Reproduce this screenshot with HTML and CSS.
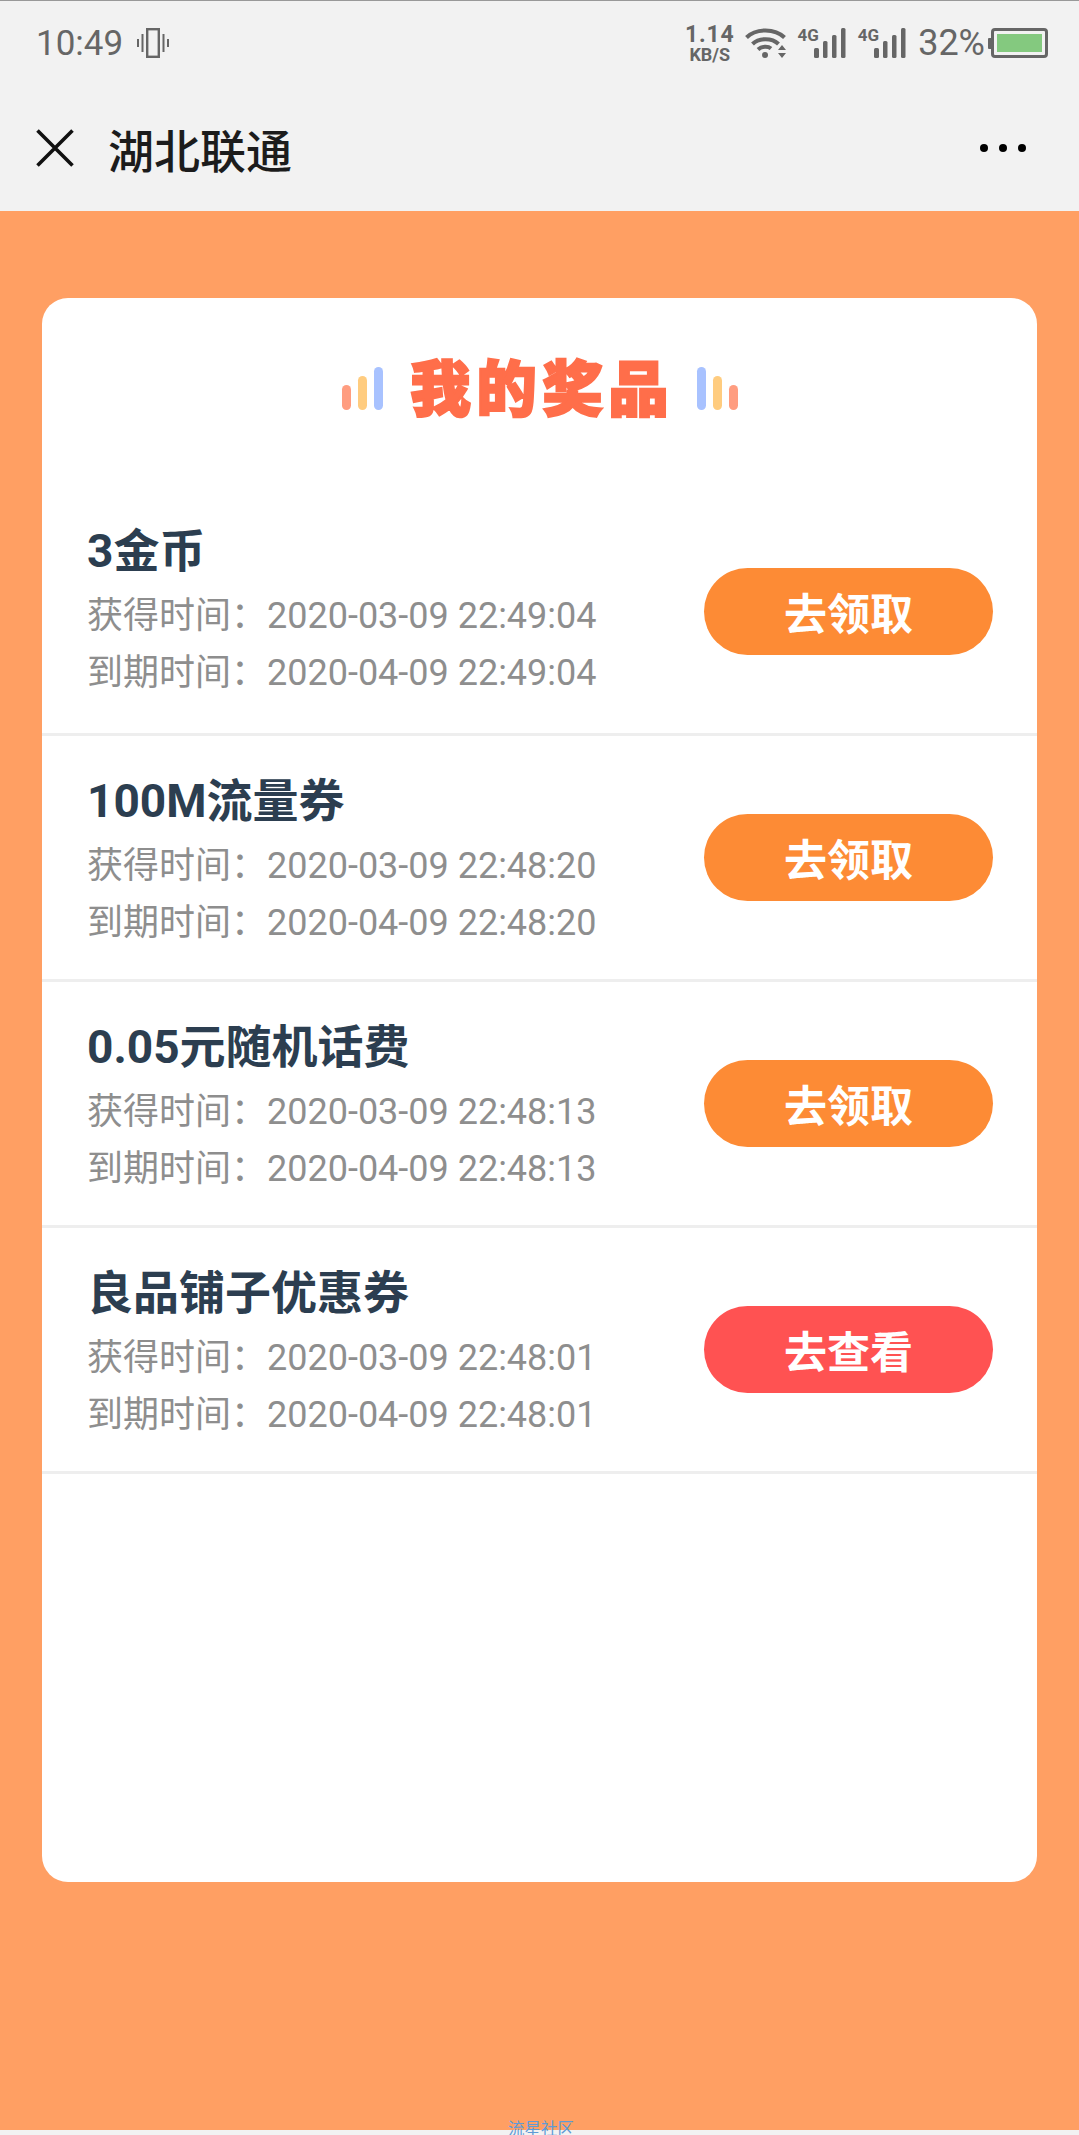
FILE: index.html
```
<!DOCTYPE html>
<html lang="zh-CN">
<head>
<meta charset="utf-8">
<title>湖北联通</title>
<link rel="stylesheet" href="styles.css">
</head>
<body>
<div class="page">
  <header class="topbar">
    <div class="status">
      <div class="status-left">
        <span class="clock">10:49</span>
        <svg class="ic-vib" width="32" height="30" viewBox="0 0 32 30"><rect x="10.2" y="1.2" width="11.6" height="27.6" fill="none" stroke="#666" stroke-width="2.4"/><path d="M5.5 6v18M1 11v8M26.5 6v18M31 11v8" stroke="#666" stroke-width="2" fill="none"/></svg>
      </div>
      <div class="status-right">
        <div class="speed"><span class="speed-num">1.14</span><span class="speed-unit">KB/S</span></div>
        <svg class="ic-wifi" width="42" height="30" viewBox="0 0 42 30"><path d="M1.5 9.5C11 0 30 0 39.5 9.5M7.5 16C14 9.500 27 9.500 33.500 16" fill="none" stroke="#666" stroke-width="4"/><path d="M13 21.500c4-3.500 10-3.500 13 -1" fill="none" stroke="#666" stroke-width="4"/><circle cx="20" cy="27" r="3" fill="#666"/><path d="M37 17l4 5h-8zM37 30l4-5h-8z" fill="#666"/></svg>
        <div class="sig"><span class="sig-label">4G</span><svg class="ic-sig" width="32" height="30" viewBox="0 0 32 30"><rect x="0" y="20" width="5" height="10" rx="1.500" fill="#666"/><rect x="9" y="13" width="4.500" height="17" rx="1.500" fill="#666"/><rect x="18" y="7" width="4.500" height="23" rx="1.500" fill="#666"/><rect x="27" y="0" width="4.500" height="30" rx="1.500" fill="#666"/></svg></div>
        <div class="sig"><span class="sig-label">4G</span><svg class="ic-sig" width="32" height="30" viewBox="0 0 32 30"><rect x="0" y="20" width="5" height="10" rx="1.500" fill="#666"/><rect x="9" y="13" width="4.500" height="17" rx="1.500" fill="#666"/><rect x="18" y="7" width="4.500" height="23" rx="1.500" fill="#666"/><rect x="27" y="0" width="4.500" height="30" rx="1.500" fill="#666"/></svg></div>
        <span class="pct">32%</span>
        <svg class="ic-bat" width="60" height="30" viewBox="0 0 60 30"><rect x="0" y="10" width="4" height="11" rx="1" fill="#666"/><rect x="4.500" y="1.500" width="54" height="27" rx="2.500" fill="none" stroke="#666" stroke-width="3"/><rect x="9" y="6" width="45" height="18" fill="#84c97f"/></svg>
      </div>
    </div>
    <nav class="nav">
      <svg class="ic-close" width="38" height="38" viewBox="0 0 38 38"><path d="M1.500 1.500l35 35M36.500 1.500l-35 35" stroke="#111" stroke-width="3.600" fill="none"/></svg>
      <span class="nav-title">湖北联通</span>
      <svg class="ic-more" width="48" height="10" viewBox="0 0 48 10"><circle cx="5" cy="5" r="4" fill="#000"/><circle cx="24" cy="5" r="4" fill="#000"/><circle cx="43" cy="5" r="4" fill="#000"/></svg>
    </nav>
  </header>

  <main class="main">
    <section class="card">
      <div class="heading">
        <div class="bars bars-up"><i class="bar bar-s"></i><i class="bar bar-m"></i><i class="bar bar-l"></i></div>
        <h1 class="heading-text">我的奖品</h1>
        <div class="bars bars-down"><i class="bar bar-l"></i><i class="bar bar-m"></i><i class="bar bar-s"></i></div>
      </div>
      <ul class="list">
        <li class="row">
          <div class="info"><div class="name">3金币</div><div class="time">获得时间：2020-03-09 22:49:04</div><div class="time">到期时间：2020-04-09 22:49:04</div></div>
          <button class="btn btn-orange">去领取</button>
        </li>
        <li class="row">
          <div class="info"><div class="name">100M流量券</div><div class="time">获得时间：2020-03-09 22:48:20</div><div class="time">到期时间：2020-04-09 22:48:20</div></div>
          <button class="btn btn-orange">去领取</button>
        </li>
        <li class="row">
          <div class="info"><div class="name">0.05元随机话费</div><div class="time">获得时间：2020-03-09 22:48:13</div><div class="time">到期时间：2020-04-09 22:48:13</div></div>
          <button class="btn btn-orange">去领取</button>
        </li>
        <li class="row">
          <div class="info"><div class="name">良品铺子优惠券</div><div class="time">获得时间：2020-03-09 22:48:01</div><div class="time">到期时间：2020-04-09 22:48:01</div></div>
          <button class="btn btn-red">去查看</button>
        </li>
      </ul>
    </section>
  </main>
  <div class="bottom-strip"></div>
  <span class="watermark">流星社区</span>
</div>
</body>
</html>
```
FILE: styles.css
```
* { box-sizing: border-box; }
html, body { margin: 0; padding: 0; }
body {
  width: 1079px;
  height: 2135px;
  overflow: hidden;
  font-family: Roboto, "Noto Sans CJK SC", sans-serif;
  background: #f2f2f2;
}
.page { position: relative; display: flex; flex-direction: column; height: 2135px; overflow: hidden; }

.topbar { background: #f2f2f2; border-top: 1px solid #999; height: 211px; flex: none; }
.status {
  height: 84px;
  display: flex;
  align-items: center;
  justify-content: space-between;
  padding: 0 31px 0 36px;
}
.status-left, .status-right { display: flex; align-items: center; }
.clock { font-size: 35px; color: #666; width: 101px; line-height: 1; }
.ic-vib { display: block; }
.speed { display: flex; flex-direction: column; align-items: center; color: #666; font-weight: 700; line-height: 1; margin-right: 11px; }
.speed-num { font-size: 23px; letter-spacing: 0.8px; line-height: 22px; }
.speed-unit { font-size: 18px; line-height: 17px; }
.ic-wifi { display: block; margin-right: 10px; }
.sig { display: flex; align-items: flex-start; margin-right: 12px; height: 30px; }
.sig-label { font-size: 17px; font-weight: 700; color: #666; line-height: 14px; margin-right: -5px; }
.ic-sig { display: block; }
.pct { font-size: 36px; color: #666; line-height: 1; }
.ic-bat { display: block; margin-left: 3px; }

.nav { height: 126px; display: flex; align-items: center; padding: 0 52px 0 36px; }
.nav-title { font-size: 46px; font-weight: 500; color: #1c1c1c; margin-left: 34px; flex: 1; line-height: 1; font-family: "Noto Sans CJK SC", sans-serif; }
.ic-close, .ic-more { display: block; }

.main { flex: 1; background: #ff9f63; padding: 87px 42px 0; overflow: hidden; }
.card { height: 1584px; background: #fff; border-radius: 26px; overflow: hidden; }

.heading { height: 192px; padding-top: 57px; display: flex; justify-content: center; align-items: flex-start; gap: 28px; }
.heading-text {
  margin: 0 -6px 0 0;
  font: 900 60px/60px "Noto Sans CJK SC", sans-serif;
  letter-spacing: 6px;
  color: #ff6e4a;
  -webkit-text-stroke: 2.500px #ff6e4a;
  white-space: nowrap;
}
.bars { display: flex; align-items: flex-end; gap: 7px; height: 43px; margin-top: 12px; }
.bar { display: block; width: 9px; border-radius: 5px; }
.bar-s { height: 25px; background: #ff9d80; }
.bar-m { height: 34px; background: #ffcc7f; }
.bar-l { height: 43px; background: #a8c2ff; }

.list { list-style: none; margin: 0; padding: 0; }
.row {
  height: 246px;
  display: flex;
  align-items: center;
  justify-content: space-between;
  padding: 1px 44px 2px 45px;
  border-bottom: 3px solid #eeeeee;
}
.info { margin-top: 7px; }
.row:first-child .info { margin-top: 0; margin-bottom: 1px; }
.name { font-size: 46px; font-weight: 700; color: #2c3e50; line-height: 62px; margin-bottom: 6px; white-space: nowrap; }
.time { font-size: 36px; color: #8e8e8e; line-height: 57px; white-space: nowrap; }

.btn {
  width: 289px;
  height: 87px;
  border: 0;
  padding: 0;
  border-radius: 44px;
  color: #fff;
  font: 700 43px/87px "Noto Sans CJK SC", sans-serif;
}
.btn-orange { background: #fd8b35; }
.btn-red { background: #ff5252; }

.watermark {
  position: absolute;
  left: 508px;
  bottom: -3px;
  font-size: 16.500px;
  line-height: 20px;
  color: #5f9bd6;
  font-family: "Noto Sans CJK SC", sans-serif;
}
.bottom-strip { height: 5px; flex: none; background: #f2f2f2; }
```
